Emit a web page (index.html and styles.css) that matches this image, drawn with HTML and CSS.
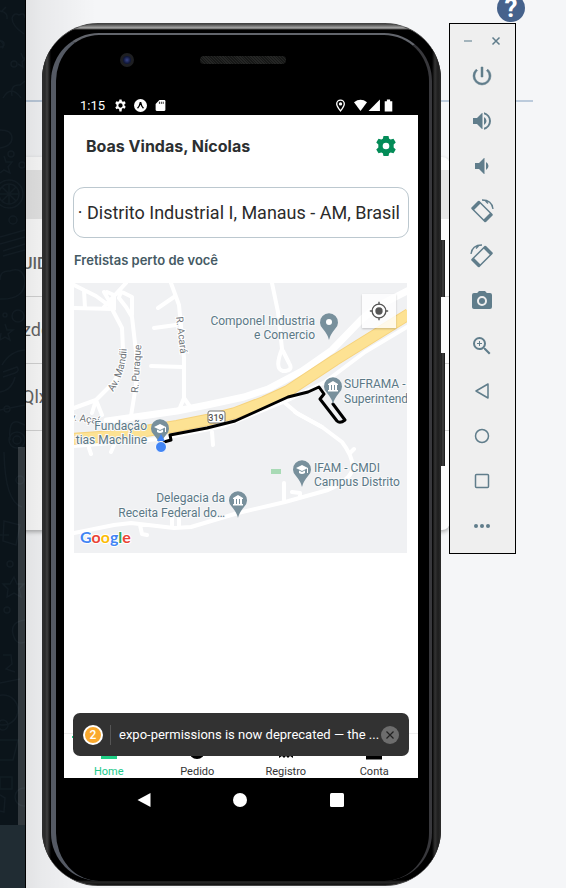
FILE: index.html
```html
<!DOCTYPE html>
<html lang="pt-BR">
<head>
<meta charset="utf-8">
<meta name="viewport" content="width=device-width, initial-scale=1">
<title>Fretistas</title>
<link rel="stylesheet" href="styles.css">
</head>
<body>
<div class="desktop">
  <div class="backdrop">
    <aside class="chat">
      <div class="chat-wall">
        <svg class="doodles" viewBox="0 0 25 825" preserveAspectRatio="xMinYMin slice" aria-hidden="true">
          <path d="M0 11q8 1 7 8M1 12l5-5M12 18q2-6 7-3 6-3 6 3M12 18q0 8 12 16M0 40q6 6 2 8M21 53l2 5 3 0-4 4 1 5-5-3M12 96q-2-12 8-11l5-4M3 98q8-14 18 0M0 130q12 0 12 8t-12 10M4 156l2 6 6 0-4 5 2 6-6-3-4 3M0 237l25-7M0 244l25-7M3 251l22-7M3 256l22-6M0 280q0-10 10-9 12-5 15 9 0 20-25 19M5 324l2 6 6 0-5 4 2 6-5-3-5 3 1-7M2 365q8-14 23-15M3 372l14-5q3 4-2 6l-12 4M0 392q12-2 15-15M0 410l25-5M10 440q-2-20 8-18l7 3M4 452q1 50 18 55M4 521l16 4-4 20-13-4zM0 535h9M14 577l3 7 7 0-5 5 2 8-7-4-7 4 1-8-5-5h7zM25 620q-15 2-12 14t12 8M3 655h8l1 9-6 5 9 3M0 683l20-4M0 740h18l-5 20h-13M0 777h12v12h-12zM0 795l5 3-1 14-4-1"/>
          <circle cx="14" cy="64" r="3"/><circle cx="1" cy="44" r="3"/><circle cx="11" cy="154" r="3"/><circle cx="22" cy="165" r="3"/>
          <circle cx="9" cy="194" r="14"/><circle cx="9" cy="194" r="10"/><path d="M9 184v20M-1 194h20M2 187l14 14M16 187l-14 14"/>
          <circle cx="13" cy="220" r="4"/><circle cx="5" cy="315" r="2"/><circle cx="18" cy="316" r="6"/><circle cx="7" cy="409" r="3"/><circle cx="17" cy="440" r="8"/><circle cx="17" cy="440" r="4"/><circle cx="20" cy="480" r="4"/><circle cx="10" cy="564" r="3"/><circle cx="7" cy="610" r="3"/><circle cx="3" cy="710" r="15"/><circle cx="3" cy="725" r="5"/><circle cx="24" cy="797" r="9"/>
        </svg>
        <div class="chat-thumb"></div>
      </div>
      <div class="chat-footer"></div>
    </aside>
    <main class="console">
      <header class="console-bar"><button class="help" type="button" aria-label="Ajuda">?</button></header>
      <section class="records">
        <div class="records-search"></div>
        <table class="records-table">
          <thead><tr><th>UID</th></tr></thead>
          <tbody><tr><td>zdg</td></tr><tr><td>Qlx</td></tr></tbody>
        </table>
      </section>
    </main>
  </div>

  <div class="windows">
    <div class="phone">
      <span class="side-key side-key-power"></span>
      <span class="side-key side-key-volume"></span>
      <div class="bezel">
        <div class="sensors"><span class="camera"></span><span class="speaker"></span></div>
        <div class="status">
          <span class="clock">1:15</span>
          <svg class="status-icon" viewBox="0 0 24 24" aria-hidden="true"><path fill-rule="evenodd" d="M10 1h4l.6 3.200 2 1.100 3-1.100 2 3.500-2.400 2.100v2.400l2.400 2.100-2 3.500-3-1.100-2 1.200L14 23h-4l-.6-4.100-2-1.200-3 1.100-2-3.500 2.400-2.100v-2.400L2.400 7.700l2-3.500 3 1.100 2-1.100zM12 8a4 4 0 1 0 0 8 4 4 0 0 0 0-8"/></svg>
          <svg class="status-icon" viewBox="0 0 24 24" aria-hidden="true"><circle cx="12" cy="12" r="12"/><path d="M6.500 17q4-4 5-10h1q1 6 5 10" fill="none" stroke="#000" stroke-width="2.500"/></svg>
          <svg class="status-icon" viewBox="0 0 24 24" aria-hidden="true"><path d="M10 2h9q2 0 2 2v16q0 2-2 2H5q-2 0-2-2V9z"/><path d="M10 5v4M13.500 5v4M17 5v4" stroke="#000" stroke-width="1.500"/></svg>
          <span class="status-gap"></span>
          <svg class="status-icon" viewBox="0 0 24 24" aria-hidden="true"><path d="M12 22Q5 13 5 9a7 7 0 0 1 14 0q0 4-7 13z" fill="none" stroke="#fff" stroke-width="2.500"/><circle cx="12" cy="9" r="3"/></svg>
          <span class="radios">
            <svg class="status-icon" viewBox="0 0 24 24" aria-hidden="true"><path d="M0 6q12-9 24 0L12 22z"/></svg>
            <svg class="status-icon" viewBox="0 0 24 24" aria-hidden="true"><path d="M1 22L22 1v21z"/></svg>
            <svg class="status-icon" viewBox="0 0 24 24" aria-hidden="true"><path d="M9 1h6v3h4v19H5V4h4z"/></svg>
          </span>
        </div>

        <div class="screen">
          <header class="app-head">
            <h1 class="greeting">Boas Vindas, Nícolas</h1>
            <button class="gear" type="button" aria-label="Configurações"><svg viewBox="0 0 24 24"><path fill-rule="evenodd" d="M9 0h6l.8 3.300 1.800 1 3.400-1.100 2.700 4.700-2.500 2.400v3.400l2.500 2.400-2.700 4.700-3.400-1.100-1.800 1L15 24H9l-.8-3.300-1.800-1L3 20.800.3 16.100l2.500-2.400v-3.400L.3 7.900 3 3.200l3.400 1.100 1.800-1zM12 8a4 4 0 1 0 0 8 4 4 0 0 0 0-8"/></svg></button>
          </header>
          <input class="address" type="text" aria-label="Endereço" value="· Distrito Industrial I, Manaus - AM, Brasil">
          <h2 class="nearby">Fretistas perto de você</h2>
          <div class="map">
            <svg viewBox="0 0 333 270" role="img" aria-label="Mapa">
              <defs>
                <path id="mandii" d="M39 109Q52 90 53 62"/>
                <g id="pin"><path d="M0 18Q-1 13-6 7A9 9 0 1 1 6 7Q1 13 0 18z"/></g>
                <g id="cap"><path d="M-6-1L0-4l6 3-6 3zM-3 1.500L0 3l3-1.500V4Q0 6-3 4z" fill="#fff"/><path d="M5.500-1v5" stroke="#fff"/></g>
                <g id="bank" fill="#fff"><path d="M-5-2L0-5l5 3v1H-5zM-5 4H5v1.500H-5zM-4-1h2v5h-2zM-1-1h2v5h-2zM2-1h2v5H2z"/></g>
              </defs>
              <rect class="land" width="333" height="270"/>
              <g class="roads">
                <path d="M0 2L22 13 37 24 48 45 49 67Q49 85 40 99L22 117 18 130M0 125L22 117 28 132M0 25L40 26M10 7L11 25M52 0L30 24M30 9L40 26M40 26V12L33 9M45 15Q46 8 50 10L58 14V32M45 15L52 24 58 34 62 69V102L57 133M97 0L105 22 110 75V115L105 127M110 115L117 125M100 14L84 25M80 45L102 42M77 83L109 84"/>
                <path d="M198 0L204 29 208 66Q200 86 209 88 220 88 215 80L209 68M211 120L224 131 248 144 268 159Q278 172 279 184 278 196 254 207L211 219 164 230 117 244 100 245 57 240 40 242 0 250M210 200V217M218 209L226 210V215M276 170L280 166M98 234V244M105 232V244M66 242L68 251 73 252M138 149L139 162M15 165L17 171M40 162L37 169"/>
                <path class="road-wide" d="M33 138L103 128 133 122 170 114 194 106 228 88 258 67 288 36 304 23 333 8"/>
                <path d="M0 163L85 156 150 143 214 117 251 99 291 69 333 44M221 129L248 144"/>
              </g>
              <path class="highway-edge" d="M-2 156L40 153 103 143 133 137 161 130 190 119 214 108 261 77 335 31"/>
              <path class="highway" d="M-2 156L40 153 103 143 133 137 161 130 190 119 214 108 261 77 335 31"/>
              <rect x="197" y="186" width="10" height="5" fill="#a8dab5"/>
              <g class="street">
                <text transform="translate(102 34) rotate(83)">R. Acará</text>
                <text transform="translate(64 110) rotate(-86)">R. Puraque</text>
                <text><textPath href="#mandii">Av. Mandii</textPath></text>
                <text transform="translate(-4 137) rotate(8)">v. Açaí</text>
              </g>
              <rect class="shield" x="134" y="128" width="17" height="12" rx="2"/>
              <text class="shield-text" x="142" y="138" text-anchor="middle">319</text>
              <path class="route" d="M90 159L97 157 96 152 133 145 161 138 181 129 214 114 234 109 245 104 250 111 246 116 263 138Q266 141 271 137L259 121"/>
              <g class="pins">
                <g transform="translate(255 39)"><use href="#pin"/><circle r="3" fill="#fff"/></g>
                <g transform="translate(86 145)"><use href="#pin"/><use href="#cap"/></g>
                <g transform="translate(259 103)"><use href="#pin"/><use href="#bank"/></g>
                <g transform="translate(228 186)"><use href="#pin"/><use href="#cap"/></g>
                <g transform="translate(164 217)"><use href="#pin"/><use href="#bank"/></g>
              </g>
              <path d="M87 151l4 7h-8z" fill="#4285f4"/>
              <circle cx="87" cy="164" r="5.500" fill="#4285f4" stroke="#fff" stroke-width="1"/>
              <g class="place">
                <g text-anchor="end">
                  <text x="241" y="42">Componel Industria</text><text x="241" y="56">e Comercio</text>
                  <text x="73" y="147">Fundação</text><text x="73" y="161">tias Machline</text>
                  <text x="151" y="219">Delegacia da</text><text x="151" y="234">Receita Federal do…</text>
                </g>
                <text x="270" y="105">SUFRAMA -</text><text x="270" y="120">Superintend</text>
                <text x="240" y="189">IFAM - CMDI</text><text x="240" y="203">Campus Distrito</text>
              </g>
              <text class="google" x="6" y="260"><tspan fill="#4285f4">G</tspan><tspan fill="#ea4335">o</tspan><tspan fill="#fbbc05">o</tspan><tspan fill="#4285f4">g</tspan><tspan fill="#34a853">l</tspan><tspan fill="#ea4335">e</tspan></text>
            </svg>
            <button class="locate" type="button" aria-label="Minha localização"><svg viewBox="0 0 24 24"><circle cx="12" cy="12" r="4"/><circle cx="12" cy="12" r="7.500" fill="none" stroke="#555" stroke-width="1.500"/><path d="M12 2v3M12 19v3M2 12h3M19 12h3" stroke="#555" stroke-width="1.500"/></svg></button>
          </div>

          <nav class="tabs">
            <a class="tab tab-active" href="#home"><svg viewBox="0 0 20 20"><path d="M10 1l9 8h-1v10H2V9H1z"/></svg>Home</a>
            <a class="tab" href="#pedido"><svg viewBox="0 0 20 20"><circle cx="10" cy="11" r="8"/></svg>Pedido</a>
            <a class="tab" href="#registro"><svg viewBox="0 0 20 20"><path d="M3 1h14v17l-3-2-2 2-2-2-2 2-2-2-3 2z"/></svg>Registro</a>
            <a class="tab" href="#conta"><svg viewBox="0 0 20 20"><circle cx="10" cy="6" r="5"/><path d="M2 19.500v-4q8-5 16 0v4z"/></svg>Conta</a>
          </nav>
          <div class="toast">
            <span class="toast-count">2</span>
            <span class="toast-text">expo-permissions is now deprecated — the ...</span>
            <button class="toast-close" type="button" aria-label="Fechar"><svg viewBox="0 0 18 18"><path d="M5.500 5.500l7 7M12.500 5.500l-7 7"/></svg></button>
          </div>
        </div>

        <div class="android-nav">
          <button type="button" aria-label="Voltar"><svg viewBox="0 0 16 16"><path d="M1.500 8L14.500 1v14z"/></svg></button>
          <button type="button" aria-label="Início"><svg viewBox="0 0 16 16"><circle cx="8" cy="8" r="7"/></svg></button>
          <button type="button" aria-label="Recentes"><svg viewBox="0 0 16 16"><rect x="1" y="1" width="14" height="14" rx="1.500"/></svg></button>
        </div>
      </div>
    </div>

    <div class="toolbar">
      <div class="toolbar-head">
        <button type="button" aria-label="Minimizar"><svg viewBox="0 0 12 12"><path d="M2 6h8" stroke="#a3b4bc" stroke-width="2"/></svg></button>
        <button type="button" aria-label="Fechar emulador"><svg viewBox="0 0 12 12"><path d="M2.500 2.500l7 7M9.500 2.500l-7 7" stroke="#607d8b" stroke-width="1.500"/></svg></button>
      </div>
      <button class="tool" type="button" aria-label="Ligar"><svg viewBox="0 0 24 24"><path stroke="#607d8b" stroke-width=".5" d="M13 3h-2v10h2V3zm4.830 2.170l-1.420 1.420A6.920 6.920 0 0 1 19 12a7 7 0 1 1-11.420-5.420L6.170 5.170A8.930 8.930 0 0 0 3 12a9 9 0 0 0 18 0c0-2.740-1.230-5.180-3.170-6.830z"/></svg></button>
      <button class="tool" type="button" aria-label="Aumentar volume"><svg viewBox="0 0 24 24"><path d="M3 9v6h4l5 5V4L7 9H3zm13.500 3A4.500 4.500 0 0 0 14 7.970v8.050A4.500 4.500 0 0 0 16.500 12zM14 3.230v2.060a7 7 0 0 1 0 13.420v2.060a9 9 0 0 0 0-17.540z"/><path opacity=".5" d="M12 4h1v16h-1z"/></svg></button>
      <button class="tool" type="button" aria-label="Diminuir volume"><svg viewBox="0 0 24 24"><path d="M18.500 12A4.500 4.500 0 0 0 16 7.970v8.050A4.500 4.500 0 0 0 18.500 12zM5 9v6h4l5 5V4L9 9H5z"/><path opacity=".5" d="M14 4h1v16h-1z"/></svg></button>
      <button class="tool" type="button" aria-label="Girar à esquerda"><svg viewBox="0 0 24 24"><g fill="none" stroke="#607d8b"><path d="M9 2.500L2 9.500 15 22.500 22 15.500z" stroke-width="1.500" stroke-linejoin="round"/><path d="M9.500 3L2.500 10M14.500 22L21.500 15" stroke-width="3.500"/><path d="M12 1Q22 1 23 10M15 1.500l3 3" stroke-width="1.300"/></g></svg></button>
      <button class="tool" type="button" aria-label="Girar à direita"><svg viewBox="0 0 24 24"><g fill="none" stroke="#607d8b"><path d="M15 2.500L22 9.500 9 22.500 2 15.500z" stroke-width="1.500" stroke-linejoin="round"/><path d="M14.500 3L21.500 10M9.500 22L2.500 15" stroke-width="3.500"/><path d="M12 1Q2 1 1 10M9 1.500l-3 3" stroke-width="1.300"/></g></svg></button>
      <button class="tool" type="button" aria-label="Captura de tela"><svg viewBox="0 0 24 24"><path fill-rule="evenodd" d="M9 2L7.170 4H4a2 2 0 0 0-2 2v12c0 1.100.9 2 2 2h16a2 2 0 0 0 2-2V6a2 2 0 0 0-2-2h-3.170L15 2H9zm3 5a5 5 0 1 1 0 10 5 5 0 0 1 0-10z"/><circle cx="12" cy="12" r="3"/></svg></button>
      <button class="tool" type="button" aria-label="Zoom"><svg viewBox="0 0 24 24"><path d="M15.500 14h-.79l-.28-.27A6.470 6.470 0 0 0 16 9.500 6.500 6.500 0 1 0 9.500 16c1.610 0 3.090-.59 4.230-1.570l.27.280v.79l5 4.990L20.490 19l-4.990-5zm-6 0a4.500 4.500 0 1 1 0-9 4.500 4.500 0 0 1 0 9zM12 10h-2v2H9v-2H7V9h2V7h1v2h2v1z"/></svg></button>
      <button class="tool" type="button" aria-label="Voltar"><svg viewBox="0 0 24 24"><path d="M6 12L18 5v14z" fill="none" stroke="#607d8b" stroke-width="1.500" stroke-linejoin="round"/></svg></button>
      <button class="tool" type="button" aria-label="Início"><svg viewBox="0 0 24 24"><circle cx="12" cy="12" r="6.500" fill="none" stroke="#607d8b" stroke-width="1.500"/></svg></button>
      <button class="tool" type="button" aria-label="Visão geral"><svg viewBox="0 0 24 24"><rect x="5.500" y="5.500" width="13" height="13" rx="1" fill="none" stroke="#607d8b" stroke-width="1.500"/></svg></button>
      <button class="tool" type="button" aria-label="Mais"><svg viewBox="0 0 24 24"><circle cx="6" cy="12" r="2"/><circle cx="12" cy="12" r="2"/><circle cx="18" cy="12" r="2"/></svg></button>
    </div>
  </div>
</div>
</body>
</html>
```
FILE: styles.css
```css
* { box-sizing: border-box; }
body { margin: 0; font-family: Roboto, "Liberation Sans", sans-serif; background: #f5f6f8; }
button { padding: 0; border: 0; background: none; font: inherit; color: inherit; }
svg { display: block; }
h1, h2 { margin: 0; }

/* Two stacked layers: the browser behind, emulator windows in front */
.desktop { display: grid; min-height: 100vh; overflow: hidden; }
.backdrop, .windows { grid-area: 1 / 1; min-width: 0; }
.backdrop { display: flex; }

.chat { flex: none; width: 26px; display: flex; flex-direction: column; border-right: 1px solid #000; background: #0b141a; z-index: 1; }
.chat-wall { position: relative; flex: 1; display: flex; justify-content: flex-end; overflow: hidden; }
.doodles { position: absolute; inset: 0; width: 100%; height: 100%; fill: none; stroke: #121c23; stroke-width: 1.5; }
.chat-thumb { position: relative; width: 7px; margin-top: 447px; background: rgba(255, 255, 255, .16); }
.chat-footer { height: 63px; background: #202c33; }

.console { position: relative; flex: 1; min-width: 0; overflow: hidden; }
.console::after { content: ""; position: absolute; inset: 0; background: linear-gradient(to right, rgba(0, 0, 0, .08), rgba(0, 0, 0, .05) 16px, transparent 70px); }
.console-bar { display: flex; justify-content: flex-end; height: 102px; margin-right: 33px; padding-right: 8px; border-bottom: 2px solid #bccbdc; }
.help { width: 28px; height: 28px; margin-top: -6px; border-radius: 50%; background: #46628c; color: #fff; font: bold 26px/28px Roboto, sans-serif; }
.records { margin: 55px 116px 0 -11px; height: 373px; padding-top: 13px; border-radius: 8px; background: #fdfdfd; box-shadow: 0 2px 4px rgba(0, 0, 0, .3); }
.records-search { height: 49px; background: #e6e6e6; }
.records-table { width: 100%; border-collapse: collapse; color: #666; font: 18px Roboto, sans-serif; text-align: left; }
.records-table th { height: 77px; padding: 12px 7px 0; font-size: 16px; font-weight: 500; border-bottom: 1px solid #d5d5d5; }
.records-table td { height: 67px; padding: 0 7px; border-bottom: 1px solid #d5d5d5; }

.windows { position: relative; z-index: 2; display: flex; gap: 8px; padding: 23px 50px 2px 42px; }

.phone { position: relative; flex: 1; min-width: 0; display: flex; padding: 9px 9px 4px; border: 1px solid #444; border-width: 1px 0; border-radius: 56px;
  background: linear-gradient(to right, #303030, #2a2a2a 3px, #404040 5px, #222 7px, #000 9px, transparent 9px, transparent calc(100% - 9px), #000 calc(100% - 9px), #333 calc(100% - 6px), #1d1d1d calc(100% - 3px), #2c2c2c), linear-gradient(#444, #aaa 4px, #000 6px, #000 calc(100% - 5px), #282828 calc(100% - 3px), #111); }
.side-key { position: absolute; left: 100%; width: 4px; background: linear-gradient(to right, #1b1b1b, #444, #111); }
.side-key-power { top: 216px; height: 57px; }
.side-key-volume { top: 329px; height: 113px; }
.bezel { flex: 1; min-width: 0; display: flex; flex-direction: column; padding: 20px 11px 0 8px; border-style: solid; border-width: 2px 3px 0 5px; border-color: #62656c #38383c #000 #555a64; border-radius: 48px; background: #000; }

.sensors { display: flex; align-items: center; gap: 66px; height: 40px; padding: 0 0 34px 56px; }
.camera { width: 14px; height: 14px; margin-bottom: -3px; border: 3px solid #1e1f22; border-radius: 50%; background: radial-gradient(circle, #38458a, #11183a 60%); }
.speaker { width: 86px; height: 8px; margin-bottom: -3px; border-radius: 4px; background: repeating-linear-gradient(45deg, #171817, #171817 1px, #252625 1px, #252625 2px); }
.status { display: flex; align-items: center; gap: 7px; height: 20px; padding: 0 23px 0 16px; color: #fff; }
.clock { width: 27px; font-size: 13px; }
.status-icon { width: 13px; height: 13px; fill: #fff; flex: none; }
.status-gap { flex: 1; }
.radios { display: flex; gap: 1px; }

.screen { position: relative; flex: 1; display: flex; flex-direction: column; background: #fff; }
.app-head { display: flex; align-items: center; justify-content: space-between; padding: 19px 22px 21px; }
.greeting { color: #2c2f31; font: 700 16px/24px Inter, sans-serif; }
.gear { width: 20px; height: 20px; fill: #048c58; }
.address { height: 51px; margin: 8px 9px 0; padding: 0 8px 0 3px; border: 1px solid #bcc8cf; border-radius: 11px; color: #2b2b2b; background: #fff; font: 18px Roboto, sans-serif; text-align: right; min-width: 0; }
.nearby { margin: 12px 10px; color: #455a64; font: 600 13px/21px Inter, sans-serif; }
.map { position: relative; margin: 0 11px 0 10px; overflow: hidden; }
.land { fill: #f0f1f3; }
.roads { fill: none; stroke: #fff; stroke-width: 4; stroke-linejoin: round; stroke-linecap: round; }
.road-wide { stroke-width: 7; }
.highway, .highway-edge, .route { fill: none; stroke-linejoin: round; }
.highway-edge { stroke: #f6d27c; stroke-width: 12; }
.highway { stroke: #fde293; stroke-width: 10; }
.route { stroke: #000; stroke-width: 3; stroke-linecap: round; }
.street { font-size: 10px; fill: #70757a; paint-order: stroke; stroke: #fff; stroke-width: 2; }
.shield { fill: #fff; stroke: #777; }
.shield-text { font-size: 9px; font-weight: 500; fill: #555; }
.pins { fill: #78909c; }
.place { font-size: 12px; fill: #5b7886; paint-order: stroke; stroke: #f8f9fa; stroke-width: 2; }
.google { font: bold 16px Lato, sans-serif; stroke: #fff; stroke-width: 2; paint-order: stroke; }
.locate { position: absolute; top: 11px; right: 11px; display: grid; place-items: center; width: 34px; height: 34px; background: rgba(255, 255, 255, .8); box-shadow: 0 1px 2px rgba(0, 0, 0, .2); }
.locate svg { width: 22px; fill: #555; }

.tabs { display: grid; grid-template-columns: repeat(4, 1fr); height: 45px; margin-top: auto; border-top: 1px solid #eee; }
.tab { position: relative; display: flex; flex-direction: column; align-items: center; gap: 5px; padding: 6px 0 0 1px; color: #333; font-size: 11px; line-height: 13px; text-decoration: none; }
.tab svg { width: 20px; height: 20px; fill: #000; }
.tab-active { color: #20c98a; }
.tab-active svg { fill: #1fcf85; }
.tab-active::before { content: ""; position: absolute; top: 2px; left: 8px; right: 8px; height: 2px; background: #1fcf85; }

.toast { position: absolute; left: 9px; right: 9px; bottom: 22px; display: flex; align-items: center; height: 43px; padding: 0 10px; border-radius: 7px; background: #323232; color: #fff; }
.toast-count { flex: none; width: 20px; height: 20px; border: 2px solid #fff; border-radius: 50%; background: #faa92d; font: 500 12px/16px Roboto, sans-serif; text-align: center; }
.toast-text { flex: 1; min-width: 0; margin-left: 7px; padding-left: 8px; border-left: 1px solid #555; font-size: 13px; line-height: 20px; white-space: nowrap; }
.toast-close { flex: none; width: 18px; height: 18px; border-radius: 50%; background: #6d6d6d; }
.toast-close svg { stroke: #222; stroke-width: 1.2; }

.android-nav { display: grid; grid-template-columns: repeat(3, 1fr); justify-items: center; height: 103px; padding: 14px 33px 0 32px; }
.android-nav button { width: 16px; height: 16px; fill: #fff; }

.toolbar { flex: none; align-self: flex-start; display: flex; flex-direction: column; width: 67px; padding: 0 1px 5px 0; border: 1px solid #000; background: #efefef; }
.toolbar-head { display: flex; justify-content: center; align-items: center; gap: 16px; height: 29px; padding-top: 5px; }
.toolbar-head button { width: 12px; height: 12px; }
.tool { display: grid; place-items: center; height: 45px; fill: #607d8b; }
.tool svg { width: 24px; height: 24px; }
```
